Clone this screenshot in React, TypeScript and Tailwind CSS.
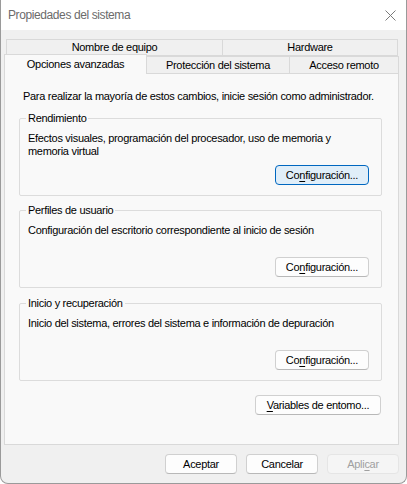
import React from 'react';

const font = { fontFamily: '"Liberation Sans", Arial, sans-serif' };

const Btn: React.FC<{ label: React.ReactNode; w: string; primary?: boolean; disabled?: boolean }> = ({
    label,
    w,
    primary = false,
    disabled = false
}) => {
    const base = 'h-[20px] flex items-center justify-center rounded-[4px] border text-[11px] leading-none';
    const look = primary
        ? 'bg-[#e0eef9] border-[#0067c0] text-black'
        : disabled
        ? 'bg-[#f5f5f5] border-[#e5e5e5] text-[#a0a0a0]'
        : 'bg-[#fdfdfd] border-[#d0d0d0] border-b-[#b8b8b8] text-black';
    return <div className={`${base} ${look} ${w}`}>{label}</div>;
};

const Config = (
    <span>
        Co<span className="underline underline-offset-2">n</span>figuración...
    </span>
);

const Group: React.FC<{ title: string; children: React.ReactNode; className?: string }> = ({
    title,
    children,
    className = ''
}) => (
    <div className={`relative ml-[14px] mr-[16px] h-[78px] border border-[#dcdcdc] rounded-[2px] ${className}`}>
        {/* etiqueta sobre el borde */}
        <span className="absolute -top-[8px] left-[6px] px-[2px] bg-[#f9f9f9] text-[11px] leading-[14px] text-black">
            {title}
        </span>
        {children}
    </div>
);

const App: React.FC = () => {
    return (
        <div
            className="w-[407px] h-[484px] bg-[#f0f0f0] rounded-b-[8px] border-x border-b border-[#9a9a9a] overflow-hidden flex flex-col tracking-[-0.3px]"
            style={font}
        >
            {/* barra de título */}
            <div className="h-[30px] bg-white flex items-center justify-between pl-[7px] pr-[10px] shrink-0">
                <span className="text-[12px] tracking-[-0.4px] text-[#6b6b6b]">Propiedades del sistema</span>
                <svg width="11" height="11" viewBox="0 0 11 11">
                    <path d="M0.5 0.5 L10.5 10.5 M10.5 0.5 L0.5 10.5" stroke="#7a7a7a" strokeWidth="1" fill="none" />
                </svg>
            </div>

            {/* pestañas */}
            <div className="pt-[9px] px-[2px] flex flex-col">
                <div className="flex ml-[3px] h-[17px] text-[11px] text-black">
                    <div className="w-[217px] border border-[#d9d9d9] bg-[#f0f0f0] flex items-center justify-center">
                        Nombre de equipo
                    </div>
                    <div className="w-[175px] border border-l-0 border-[#d9d9d9] bg-[#f0f0f0] flex items-center justify-center">
                        Hardware
                    </div>
                </div>
                <div className="flex items-end -mt-[2px] h-[19px] text-[11px] text-black relative z-10">
                    <div className="w-[143px] h-[20px] -mb-px ml-px border border-b-0 border-[#d9d9d9] bg-[#f9f9f9] flex items-start justify-center pt-[1px]">
                        Opciones avanzadas
                    </div>
                    <div className="w-[143px] h-[17px] border-t border-r border-[#d9d9d9] bg-[#f0f0f0] flex items-center justify-center">
                        Protección del sistema
                    </div>
                    <div className="w-[109px] h-[17px] border-t border-r border-[#d9d9d9] bg-[#f0f0f0] flex items-center justify-center">
                        Acceso remoto
                    </div>
                </div>

                {/* panel */}
                <div className="ml-px w-[395px] h-[372px] border border-[#d9d9d9] bg-[#f9f9f9] flex flex-col">
                    <p className="pl-[18px] pt-[15px] text-[11px] leading-[14px] text-black">
                        Para realizar la mayoría de estos cambios, inicie sesión como administrador.
                    </p>

                    <Group title="Rendimiento" className="mt-[15px]">
                        <p className="pl-[8px] pt-[13px] text-[11px] leading-[13px] text-black">
                            Efectos visuales, programación del procesador, uso de memoria y
                            <br />
                            memoria virtual
                        </p>
                        <div className="absolute right-[12px] top-[46px]">
                            <Btn label={Config} w="w-[94px]" primary />
                        </div>
                    </Group>

                    <Group title="Perfiles de usuario" className="mt-[14px]">
                        <p className="pl-[8px] pt-[13px] text-[11px] leading-[13px] text-black">
                            Configuración del escritorio correspondiente al inicio de sesión
                        </p>
                        <div className="absolute right-[12px] top-[46px]">
                            <Btn label={Config} w="w-[94px]" />
                        </div>
                    </Group>

                    <Group title="Inicio y recuperación" className="mt-[15px]">
                        <p className="pl-[8px] pt-[13px] text-[11px] leading-[13px] text-black">
                            Inicio del sistema, errores del sistema e información de depuración
                        </p>
                        <div className="absolute right-[12px] top-[46px]">
                            <Btn label={Config} w="w-[94px]" />
                        </div>
                    </Group>

                    <div className="flex justify-end mr-[17px] mt-[14px]">
                        <Btn
                            label={
                                <span>
                                    <span className="underline underline-offset-2">V</span>ariables de entomo...
                                </span>
                            }
                            w="w-[126px]"
                        />
                    </div>
                </div>
            </div>

            {/* botones inferiores */}
            <div className="flex justify-end gap-[9px] pr-[7px] mt-[9px]">
                <Btn label="Aceptar" w="w-[72px]" />
                <Btn label="Cancelar" w="w-[72px]" />
                <Btn
                    label={
                        <span>
                            Apli<span className="underline underline-offset-2">c</span>ar
                        </span>
                    }
                    w="w-[72px]"
                    disabled
                />
            </div>
        </div>
    );
};

export default App;
